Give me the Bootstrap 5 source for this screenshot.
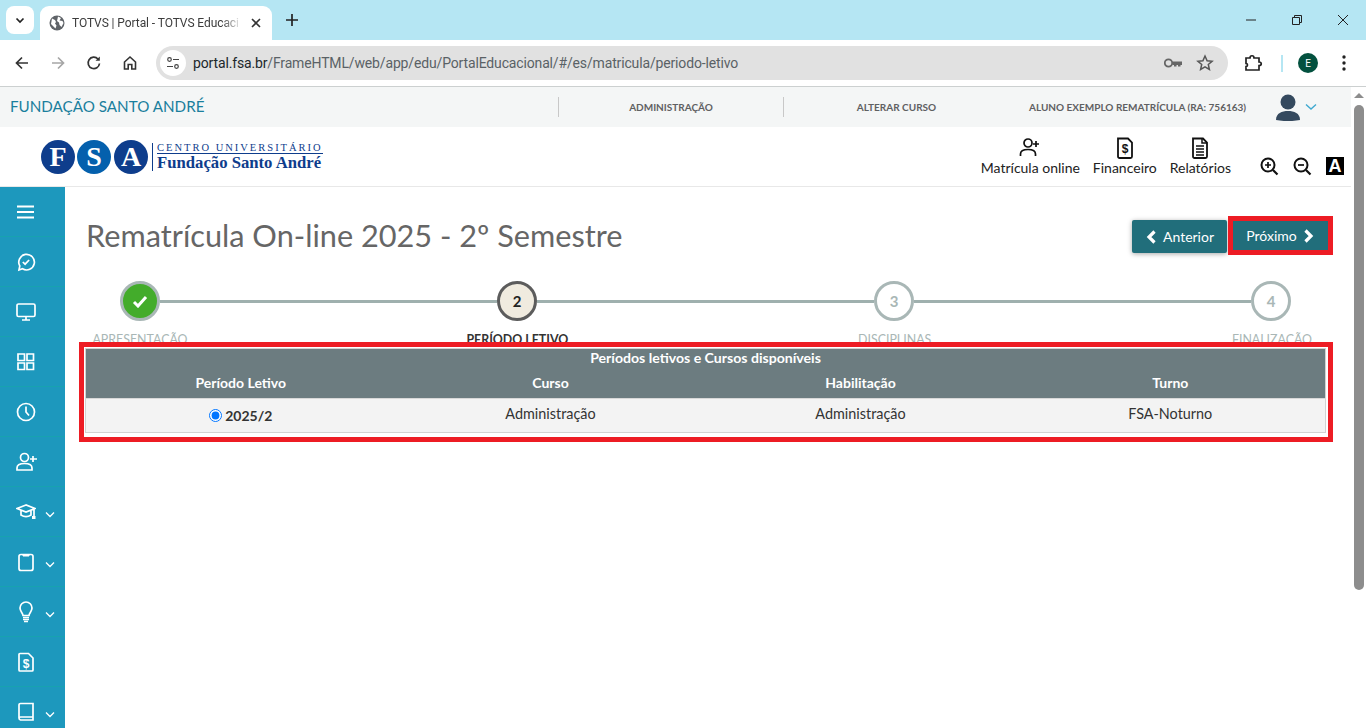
<!DOCTYPE html>
<html lang="es">
<head>
<meta charset="utf-8">
<title>TOTVS | Portal - TOTVS Educacional</title>
<link href="https://cdn.jsdelivr.net/npm/bootstrap@5.3.0/dist/css/bootstrap.min.css" rel="stylesheet">
<style>
html,body{height:728px;overflow:hidden;margin:0;background:#fff}
body{font-family:"Lato","Noto Sans",sans-serif;color:#333}
svg{display:block;flex:none}
.ui-chrome{font-family:"Roboto","Liberation Sans",sans-serif}
.tabstrip{height:40px;background:#b5e6f3}
.tab-menu{width:28px;height:28px;margin:6px 6px 0 6px;background:#fff;border-radius:8px}
.tab-active{width:232px;height:34px;margin-top:6px;background:#fff;border-radius:9px 9px 0 0;padding:0 10px 0 9px;font-size:12px;color:#3c3c3c;white-space:nowrap}
.tab-text{width:170px;margin:0 8px 0 7px;letter-spacing:-.08px;-webkit-mask-image:linear-gradient(90deg,#000 88%,transparent);mask-image:linear-gradient(90deg,#000 88%,transparent)}
.win-btns{gap:34px;padding-right:17px}
.plus-wrap{margin-left:13px}
.toolbar{height:47px;background:#fff;border-bottom:1px solid #ccd0d0;border-radius:10px 10px 0 0;padding:0 13px 0 13px}
.toolbar-nav{gap:18px;width:143px}
.omnibox{width:1072px;height:34px;background:#e1e1e1;border-radius:17px;padding:0 14px 0 4px;font-size:14px;color:#5a6166;letter-spacing:-.15px}
.omni-badge{width:26px;height:26px;border-radius:50%;background:#fff;margin-right:7px}
.omni-host{color:#20272b}
.omni-end{gap:14px}
.tool-end{width:104px;margin-left:16px}
.tool-sep{width:2px;height:17px;background:#b5e6f3;margin:0 15px 0 17px}
.avatar-e{width:20px;height:20px;border-radius:50%;background:#03513f;color:#fff;font-size:10px;margin-right:24px;flex:none}
.topbar{height:40px;background:#f4f6f6;padding-left:10px;font-size:10px;color:#5f6062;font-weight:700}
.brand-name{width:548px;font-size:15.200px;font-weight:400;color:#1a7f9d;padding-bottom:2px}
.top-cell{height:20px;border-left:1px solid #c8c8c8;text-align:center}
.top-a{width:225px}
.top-b{width:245px;padding-right:19px}
.user-name{width:247px;padding-left:1px;text-align:left;white-space:nowrap}
.user-chev{margin-left:4px}
.brandbar{height:60px;background:#fff;border-bottom:1px solid #e8e8e8;padding:0 7px 0 41px}
.logo-circle{width:34px;height:34px;border-radius:50%;background:#0e3d8c;color:#fff;font:700 28px/34px "Liberation Serif",serif;text-align:center}
.logo-mid{background:#0460ad;margin:0 3px 0 2px}
.logo-rule{width:1px;height:28px;background:#0e3d8c;margin:0 4px 0 4px}
.logo-sup{font:400 10.500px/11px "Liberation Serif",serif;letter-spacing:2px;color:#0e3d8c;border-bottom:1px solid #0e3d8c;white-space:nowrap}
.logo-main{font:700 16.700px/17px "Liberation Serif",serif;color:#0e3d8c;white-space:nowrap}
.head-link{font-size:14px;color:#222;line-height:18px;white-space:nowrap}
.head-links{gap:13px;margin-right:29px}
.zoom-tools{gap:14px;margin-top:20px}
.a-box{width:18px;height:18px;background:#000;color:#fff;font:700 18px/18px "Liberation Sans",sans-serif;text-align:center}
.app-row{height:541px;overflow:hidden}
.sidebar{width:65px;background:#1d98bd;color:#fff;flex:none}
.side-item{height:50px;border-bottom:1px solid #17a2b0;padding-left:16px}
.side-caret{margin:6px 0 0 9px}
.main-col{width:1286px;padding:0 18px 0 14px}
.title-row{height:92px;padding:29px 0 0 7px}
.page-title{font-size:30.700px;font-weight:400;color:#666;margin:0;line-height:40px;white-space:nowrap}
.act-btn{background:#216e7b;color:#fff;border:0;border-radius:2px;height:33px;font-size:14px;padding:0;box-shadow:0 1px 5px rgba(0,0,0,.35);gap:6px}
.act-prev{width:95px;margin:4px 1px 0 0}
.act-wrap{border:5px solid #ed1c24}
.act-next{width:95px;box-shadow:none;height:29px;border-radius:0}
.step-clip{height:63px;overflow:hidden}
.circle-row{padding-left:41px;padding-right:42px;height:44px}
.step-dot{width:40px;height:40px;border-radius:50%;border:3px solid #a9b7b6;color:#a9b7b6;font-weight:700;font-size:15px;background:#fff;flex:none}
.dot-done{background:#43ac2b}
.dot-now{background:#f0ebdf;border-color:#5c5c5c;color:#222}
.step-line{height:3px;background:#9fb0ae;flex:1;margin-top:1px}
.label-row{margin-top:9px;width:1254px}
.step-label{width:122px;text-align:center;font-size:12.400px;line-height:16px;color:#a9b7b6;white-space:nowrap}
.label-now{color:#333;font-weight:700}
.annot-box{border:5px solid #ed1c24;background:#fff;padding:1px 2px 1px 1px;height:100px}
.fsa-table{table-layout:fixed;margin:0;border:1px solid #d2d2d2;border-radius:3px;font-size:14.400px}
.fsa-table th{background:#6c7c80;color:#fff;border:0;font-weight:700;padding:0;text-align:center;box-shadow:none;font-size:14px}
.fsa-table .row-cap{height:22px;font-size:14.100px;line-height:18px;vertical-align:top}
.fsa-table .row-head{height:28px;border-bottom:1px solid #d8d8d8;vertical-align:top;line-height:24px}
.fsa-table td{background:#f3f3f3;border:0;text-align:center;height:34px;padding:0 0 3px;vertical-align:middle;color:#333;box-shadow:none}
.fsa-table .radio-cell{font-size:14px;font-weight:700;padding:0}
.period-radio{width:13px;height:13px;margin:0 3px 0 0;vertical-align:-1px}
.scroll-rail{width:15px;background:#fff;flex:none;height:641px}
.rail-arrow{width:0;height:0;border-left:5px solid transparent;border-right:5px solid transparent;border-bottom:5px solid #8d8d8d;margin:6px 0 0 3px}
.rail-thumb{width:10px;height:485px;background:#8d8d8d;border-radius:5px;margin:7px 0 0 3px}
.page-shell{width:1351px}
</style>
</head>
<body>
<div class="ui-chrome">
  <div class="tabstrip d-flex">
    <div class="tab-menu d-flex align-items-center justify-content-center"><svg width="12" height="12" viewBox="0 0 12 12"><path d="M2.5 4.5 6 8l3.500-3.500" fill="none" stroke="#222" stroke-width="1.700"/></svg></div>
    <div class="tab-active d-flex align-items-center">
      <svg width="16" height="16" viewBox="0 0 16 16"><circle cx="8" cy="8" r="7.500" fill="#5f6368"/><path d="M3 3.500 6 5l1 2-1 1.500 1.500 2-1 3L2 9zM9 1.500l3 1.500-1.500 2.500 3 .5 1 2-2 4-2-2-.5-2.500-2-1.500z" fill="#fff"/></svg>
      <span class="tab-text">TOTVS | Portal - TOTVS Educaci</span>
      <svg width="12" height="12" viewBox="0 0 12 12"><path d="M2 2l8 8M10 2l-8 8" stroke="#333" stroke-width="1.600"/></svg>
    </div>
    <div class="plus-wrap d-flex align-items-center"><svg width="14" height="14" viewBox="0 0 14 14"><path d="M7 1v12M1 7h12" stroke="#222" stroke-width="1.700"/></svg></div>
    <div class="win-btns d-flex align-items-center ms-auto">
      <svg width="12" height="12" viewBox="0 0 12 12"><path d="M1 6h10" stroke="#222"/></svg>
      <svg width="12" height="12" viewBox="0 0 12 12"><path d="M1.500 3.500h7v7h-7zM3.500 3.500v-2h7v7h-2" fill="none" stroke="#222"/></svg>
      <svg width="12" height="12" viewBox="0 0 12 12"><path d="M1 1l10 10M11 1 1 11" stroke="#222"/></svg>
    </div>
  </div>
  <div class="toolbar d-flex align-items-center">
    <div class="toolbar-nav d-flex align-items-center">
      <svg width="18" height="18" viewBox="0 0 18 18"><path d="M15 9H4M9 3.500 3.500 9 9 14.500" fill="none" stroke="#333" stroke-width="1.700"/></svg>
      <svg width="18" height="18" viewBox="0 0 18 18"><path d="M3 9h11M9 3.500 14.500 9 9 14.500" fill="none" stroke="#a6a6a6" stroke-width="1.700"/></svg>
      <svg width="18" height="18" viewBox="0 0 18 18"><path d="M14.500 9.500A5.700 5.700 0 1 1 13 5" fill="none" stroke="#333" stroke-width="1.700"/><path d="M14.800 2.500v4.300h-4.300z" fill="#333"/></svg>
      <svg width="18" height="18" viewBox="0 0 18 18"><path d="M3.500 8 9 3l5.500 5v7h-3.700v-4.500H7.200V15H3.500z" fill="none" stroke="#333" stroke-width="1.600"/></svg>
    </div>
    <div class="omnibox d-flex align-items-center">
      <div class="omni-badge d-flex align-items-center justify-content-center"><svg width="14" height="14" viewBox="0 0 14 14"><circle cx="3.500" cy="3.500" r="1.800" fill="none" stroke="#444" stroke-width="1.200"/><path d="M7 3.500h6M1 10.500h6" stroke="#444" stroke-width="1.200"/><circle cx="10.500" cy="10.500" r="1.800" fill="none" stroke="#444" stroke-width="1.200"/></svg></div>
      <span class="omni-host">portal.fsa.br</span><span>/FrameHTML/web/app/edu/PortalEducacional/#/es/matricula/periodo-letivo</span>
      <div class="omni-end d-flex align-items-center ms-auto">
        <svg width="18" height="18" viewBox="0 0 18 18"><circle cx="4.500" cy="9" r="3.700" fill="none" stroke="#666" stroke-width="1.800"/><path d="M8.500 7.500H18v3.500h-1.500v1.500H14V11h-1.500v1.500H10V11H8.500z" fill="#666"/></svg>
        <svg width="18" height="18" viewBox="0 0 18 18"><path d="m9 2 2.100 4.700 5 .5-3.800 3.300 1.100 5L9 12.900 4.600 15.500l1.100-5L1.900 7.200l5-.5z" fill="none" stroke="#555" stroke-width="1.500"/></svg>
      </div>
    </div>
    <div class="tool-end d-flex align-items-center">
      <svg width="20" height="18" viewBox="0 0 20 18"><path d="M2 4h4c0-3 4-3 4 0h5v4c3 0 3 3.500 0 3.500V16H2v-3.500c2 0 2-3 0-3z" fill="none" stroke="#222" stroke-width="1.700"/></svg>
      <div class="tool-sep"></div>
      <div class="avatar-e d-flex align-items-center justify-content-center">E</div>
      <svg width="4" height="16" viewBox="0 0 4 16"><circle cx="2" cy="2" r="1.700" fill="#222"/><circle cx="2" cy="8" r="1.700" fill="#222"/><circle cx="2" cy="14" r="1.700" fill="#222"/></svg>
    </div>
  </div>
</div>

<div class="d-flex">
<div class="page-shell">
  <div class="topbar d-flex align-items-center">
    <div class="brand-name">FUNDAÇÃO SANTO ANDRÉ</div>
    <div class="top-cell top-a d-flex align-items-center justify-content-center">ADMINISTRAÇÃO</div>
    <div class="top-cell top-b d-flex align-items-center justify-content-center">ALTERAR CURSO</div>
    <div class="user-name">ALUNO EXEMPLO REMATRÍCULA (RA: 756163)</div>
    <svg width="26" height="28" viewBox="0 0 26 28"><circle cx="13" cy="9" r="7.500" fill="#34495e"/><path d="M1 27c0-7 6-9 12-9s12 2 12 9c-7 1.500-17 1.500-24 0z" fill="#34495e"/></svg>
    <svg class="user-chev" width="12" height="8" viewBox="0 0 12 8"><path d="M1 1.500 6 6l5-4.500" fill="none" stroke="#3fa9d0" stroke-width="1.400"/></svg>
  </div>
  <div class="brandbar d-flex align-items-center">
    <div class="d-flex align-items-center">
      <div class="logo-circle">F</div><div class="logo-circle logo-mid">S</div><div class="logo-circle">A</div>
      <div class="logo-rule"></div>
      <div><div class="logo-sup">CENTRO UNIVERSITÁRIO</div><div class="logo-main">Fundação Santo André</div></div>
    </div>
    <div class="d-flex ms-auto align-items-start">
      <div class="head-links d-flex">
        <div class="head-link d-flex flex-column align-items-center"><svg width="22" height="22" viewBox="0 0 22 22"><circle cx="9" cy="6" r="4" fill="none" stroke="#111" stroke-width="1.700"/><path d="M1.500 19v-2c0-3 3-4.500 7.500-4.500s7.500 1.500 7.500 4.500v2" fill="none" stroke="#111" stroke-width="1.700"/><path d="M17 4v6M14 7h6" stroke="#111" stroke-width="1.700"/></svg>Matrícula online</div>
        <div class="head-link d-flex flex-column align-items-center"><svg width="22" height="22" viewBox="0 0 22 22"><path d="M4 1.500h10l4 4v14a1.500 1.500 0 0 1-1.500 1.500h-11A1.500 1.500 0 0 1 4 19.500z" fill="none" stroke="#111" stroke-width="1.800"/><text x="11" y="16" text-anchor="middle" font-size="12" font-weight="700" font-family="Liberation Sans" fill="#111">$</text></svg>Financeiro</div>
        <div class="head-link d-flex flex-column align-items-center"><svg width="22" height="22" viewBox="0 0 22 22"><path d="M4 1.500h10l4 4v14a1.500 1.500 0 0 1-1.500 1.500h-11A1.500 1.500 0 0 1 4 19.500z" fill="none" stroke="#111" stroke-width="1.800"/><path d="M7 9h8M7 12h8M7 15h8M7 18h8" stroke="#111" stroke-width="1.500"/><path d="M13 2v4h5" fill="none" stroke="#111" stroke-width="1.500"/></svg>Relatórios</div>
      </div>
      <div class="zoom-tools d-flex align-items-center">
        <svg width="19" height="19" viewBox="0 0 19 19"><circle cx="8" cy="8" r="6.500" fill="none" stroke="#111" stroke-width="2"/><path d="m13 13 4.500 4.500" stroke="#111" stroke-width="2.200"/><path d="M8 5v6M5 8h6" stroke="#111" stroke-width="1.700"/></svg>
        <svg width="19" height="19" viewBox="0 0 19 19"><circle cx="8" cy="8" r="6.500" fill="none" stroke="#111" stroke-width="2"/><path d="m13 13 4.500 4.500" stroke="#111" stroke-width="2.200"/><path d="M5 8h6" stroke="#111" stroke-width="1.700"/></svg>
        <div class="a-box">A</div>
      </div>
    </div>
  </div>

  <div class="app-row d-flex">
    <nav class="sidebar">
      <div class="side-item d-flex align-items-center"><svg width="20" height="14" viewBox="0 0 20 14"><path d="M1 1.500h17M1 7h17M1 12.500h17" stroke="#fff" stroke-width="1.800"/></svg></div>
      <div class="side-item d-flex align-items-center"><svg width="20" height="20" viewBox="0 0 20 20"><path d="M3 18l.8-4A7.800 7.800 0 1 1 6.500 16.800z" fill="none" stroke="#fff" stroke-width="1.700"/><path d="m6.800 10 2.300 2.200 4-4.200" fill="none" stroke="#fff" stroke-width="1.700"/></svg></div>
      <div class="side-item d-flex align-items-center"><svg width="20" height="20" viewBox="0 0 20 20"><rect x="1" y="2" width="18" height="12.500" rx="1.500" fill="none" stroke="#fff" stroke-width="1.700"/><path d="M10 14.500v3M6 18h8" stroke="#fff" stroke-width="1.700"/></svg></div>
      <div class="side-item d-flex align-items-center"><svg width="20" height="20" viewBox="0 0 20 20"><path d="M2 2h6.500v6.500H2zM11 2h6.500v6.500H11zM2 11h6.500v6.500H2zM11 11h6.500v6.500H11z" fill="none" stroke="#fff" stroke-width="1.700"/></svg></div>
      <div class="side-item d-flex align-items-center"><svg width="20" height="20" viewBox="0 0 20 20"><circle cx="10" cy="10" r="8.500" fill="none" stroke="#fff" stroke-width="1.700"/><path d="M10 4.500V10l3 3.500" fill="none" stroke="#fff" stroke-width="1.700"/></svg></div>
      <div class="side-item d-flex align-items-center"><svg width="22" height="20" viewBox="0 0 22 20"><circle cx="8.500" cy="5.500" r="4" fill="none" stroke="#fff" stroke-width="1.700"/><path d="M1 18v-2c0-3 3-4.500 7.500-4.500S16 13 16 16v2z" fill="none" stroke="#fff" stroke-width="1.700"/><path d="M17 4v6M14 7h7" stroke="#fff" stroke-width="1.700"/></svg></div>
      <div class="side-item d-flex align-items-center"><svg width="20" height="20" viewBox="0 0 20 20"><path d="M10 3 1 6.500 10 10l9-3.500zM5 8.500v4.500c3 2 7 2 10 0V8.500M18 7v7" fill="none" stroke="#fff" stroke-width="1.700"/><rect x="16" y="14" width="3.500" height="3" fill="#fff"/></svg><svg class="side-caret" width="10" height="7" viewBox="0 0 10 7"><path d="M1 1.500 5 5.500l4-4" fill="none" stroke="#fff" stroke-width="1.300"/></svg></div>
      <div class="side-item d-flex align-items-center"><svg width="20" height="20" viewBox="0 0 20 20"><rect x="3" y="2.500" width="14" height="16" rx="2" fill="none" stroke="#fff" stroke-width="1.700"/><path d="M7 2.500h6v1.500H7z" fill="#fff" stroke="#fff"/></svg><svg class="side-caret" width="10" height="7" viewBox="0 0 10 7"><path d="M1 1.500 5 5.500l4-4" fill="none" stroke="#fff" stroke-width="1.300"/></svg></div>
      <div class="side-item d-flex align-items-center"><svg width="20" height="22" viewBox="0 0 20 22"><path d="M7 14.500C7 12 4 10.500 4 7a6 6 0 0 1 12 0c0 3.500-3 5-3 7.500z" fill="none" stroke="#fff" stroke-width="1.700"/><path d="M7 16.500h6M7 18.500h6M8 20.500h4" stroke="#fff" stroke-width="1.300"/></svg><svg class="side-caret" width="10" height="7" viewBox="0 0 10 7"><path d="M1 1.500 5 5.500l4-4" fill="none" stroke="#fff" stroke-width="1.300"/></svg></div>
      <div class="side-item d-flex align-items-center"><svg width="20" height="20" viewBox="0 0 20 20"><path d="M3 2.500a1 1 0 0 1 1-1h8.500l4.500 4.500v12a1 1 0 0 1-1 1H4a1 1 0 0 1-1-1z" fill="none" stroke="#fff" stroke-width="1.700"/><text x="10" y="15.500" text-anchor="middle" font-size="12" font-weight="700" font-family="Liberation Sans" fill="#fff">$</text></svg></div>
      <div class="side-item d-flex align-items-center"><svg width="20" height="20" viewBox="0 0 20 20"><path d="M3 16V3a1.500 1.500 0 0 1 1.500-1.500H17v13.500H4.500A1.500 1.500 0 0 0 3 16a2 2 0 0 0 1.500 2H17v-3" fill="none" stroke="#fff" stroke-width="1.700"/></svg><svg class="side-caret" width="10" height="7" viewBox="0 0 10 7"><path d="M1 1.500 5 5.500l4-4" fill="none" stroke="#fff" stroke-width="1.300"/></svg></div>
    </nav>
    <main class="main-col">
      <div class="title-row d-flex justify-content-between">
        <h1 class="page-title">Rematrícula On-line 2025 - 2º Semestre</h1>
        <div class="d-flex align-items-start">
          <button class="act-btn act-prev d-flex align-items-center justify-content-center"><svg width="12" height="14" viewBox="0 0 12 14"><path d="M9.500 1.500 4 7l5.500 5.500" fill="none" stroke="#fff" stroke-width="3.200"/></svg>Anterior</button>
          <div class="act-wrap"><button class="act-btn act-next d-flex align-items-center justify-content-center">Próximo<svg width="12" height="14" viewBox="0 0 12 14"><path d="M2.500 1.500 8 7l-5.500 5.500" fill="none" stroke="#fff" stroke-width="3.200"/></svg></button></div>
        </div>
      </div>
      <div class="step-clip">
        <div class="circle-row d-flex align-items-center">
          <div class="step-dot dot-done d-flex align-items-center justify-content-center"><svg width="16" height="13" viewBox="0 0 16 13"><path d="m2 7 4 4 8-9" fill="none" stroke="#fff" stroke-width="3"/></svg></div>
          <div class="step-line"></div>
          <div class="step-dot dot-now d-flex align-items-center justify-content-center">2</div>
          <div class="step-line"></div>
          <div class="step-dot d-flex align-items-center justify-content-center">3</div>
          <div class="step-line"></div>
          <div class="step-dot d-flex align-items-center justify-content-center">4</div>
        </div>
        <div class="label-row d-flex justify-content-between">
          <div class="step-label">APRESENTAÇÃO</div>
          <div class="step-label label-now">PERÍODO LETIVO</div>
          <div class="step-label">DISCIPLINAS</div>
          <div class="step-label">FINALIZAÇÃO</div>
        </div>
      </div>
      <div class="annot-box">
        <table class="table fsa-table">
          <thead>
            <tr><th class="row-cap" colspan="4">Períodos letivos e Cursos disponíveis</th></tr>
            <tr><th class="row-head">Período Letivo</th><th class="row-head">Curso</th><th class="row-head">Habilitação</th><th class="row-head">Turno</th></tr>
          </thead>
          <tbody>
            <tr><td class="radio-cell"><input class="period-radio" type="radio" name="periodo" checked aria-label="2025/2">2025/2</td><td>Administração</td><td>Administração</td><td>FSA-Noturno</td></tr>
          </tbody>
        </table>
      </div>
    </main>
  </div>
</div>
<aside class="scroll-rail"><div class="rail-arrow"></div><div class="rail-thumb"></div></aside>
</div>
</body>
</html>
